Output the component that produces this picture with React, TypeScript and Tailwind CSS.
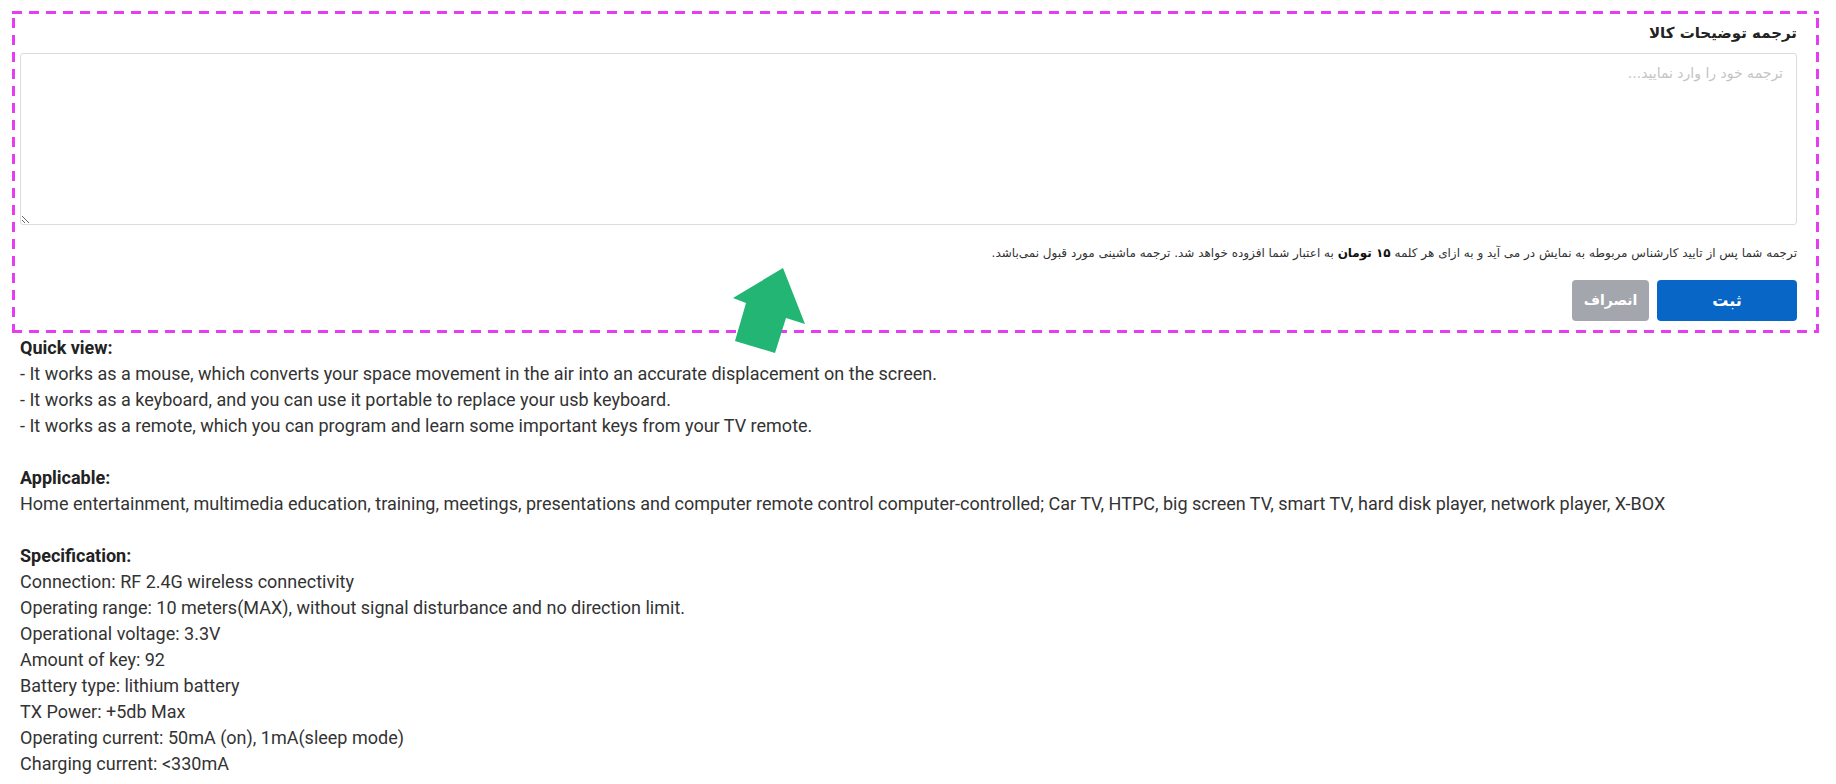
import React from "react";

const lines1 = [
  "- It works as a mouse, which converts your space movement in the air into an accurate displacement on the screen.",
  "- It works as a keyboard, and you can use it portable to replace your usb keyboard.",
  "- It works as a remote, which you can program and learn some important keys from your TV remote.",
];

const specs = [
  "Connection: RF 2.4G wireless connectivity",
  "Operating range: 10 meters(MAX), without signal disturbance and no direction limit.",
  "Operational voltage: 3.3V",
  "Amount of key: 92",
  "Battery type: lithium battery",
  "TX Power: +5db Max",
  "Operating current: 50mA (on), 1mA(sleep mode)",
  "Charging current: <330mA",
];

export default function App() {
  return (
    <div className="relative w-[1836px] h-[784px] overflow-hidden bg-white">
      <div className="pt-[11px] pl-[12px]">
        <div
          dir="rtl"
          className="w-[1807px] pt-[10px] pb-[12px] pr-[22px] pl-[8px] font-['DejaVu_Sans',sans-serif] [background-image:linear-gradient(90deg,#e43ef0_60%,transparent_60%),linear-gradient(90deg,#e43ef0_60%,transparent_60%),linear-gradient(0deg,#e43ef0_60%,transparent_60%),linear-gradient(0deg,#e43ef0_60%,transparent_60%)] [background-size:17px_3px,17px_3px,3px_17px,3px_17px] [background-position:0_0,0_100%,0_0,100%_0] [background-repeat:repeat-x,repeat-x,repeat-y,repeat-y]"
        >
          <div className="h-[24px] leading-[24px] text-[15px] font-bold text-[#222]">
            ترجمه توضیحات کالا
          </div>
          <textarea
            dir="rtl"
            placeholder="ترجمه خود را وارد نمایید..."
            className="mt-[8px] block w-full h-[172px] border border-[#dcdcdc] rounded-[3px] px-[13px] py-[8px] text-[14px] leading-[22px] text-[#333] placeholder:text-[#c4c4c4] outline-none bg-white font-['DejaVu_Sans',sans-serif]"
          />
          <div className="mt-[18px] h-[20px] leading-[20px] text-[12px] text-[#333]">
            ترجمه شما پس از تایید کارشناس مربوطه به نمایش در می آید و به ازای هر کلمه{" "}
            <span className="font-bold text-[#111]">۱۵ تومان</span> به اعتبار شما افزوده خواهد شد. ترجمه ماشینی مورد قبول نمی‌باشد.
          </div>
          <div className="mt-[17px] flex gap-[8px]">
            <button className="w-[140px] h-[41px] rounded-[4px] bg-[#0866c6] text-white text-[16px] font-bold">
              ثبت
            </button>
            <button className="w-[77px] h-[41px] rounded-[4px] bg-[#a3a6ad] text-white text-[14px] font-bold">
              انصراف
            </button>
          </div>
        </div>
      </div>

      <div className="mt-[2px] pl-[20px] font-['Roboto',sans-serif] text-[18px] leading-[26px] text-[#333]">
        <div className="font-bold text-[#222]">Quick view:</div>
        {lines1.map((l) => (
          <div key={l}>{l}</div>
        ))}
        <div className="h-[26px]" />
        <div className="font-bold text-[#222]">Applicable:</div>
        <div>
          Home entertainment, multimedia education, training, meetings, presentations and computer remote control computer-controlled; Car TV, HTPC, big screen TV, smart TV, hard disk player, network player, X-BOX
        </div>
        <div className="h-[26px]" />
        <div className="font-bold text-[#222]">Specification:</div>
        {specs.map((l) => (
          <div key={l}>{l}</div>
        ))}
      </div>

      <svg
        className="absolute left-[720px] top-[255px]"
        width="100"
        height="110"
        viewBox="0 0 100 110"
      >
        <polygon
          points="63,13 85,69 66,63 55,98 15,86 26,48 13,43"
          fill="#22b573"
        />
      </svg>
    </div>
  );
}
